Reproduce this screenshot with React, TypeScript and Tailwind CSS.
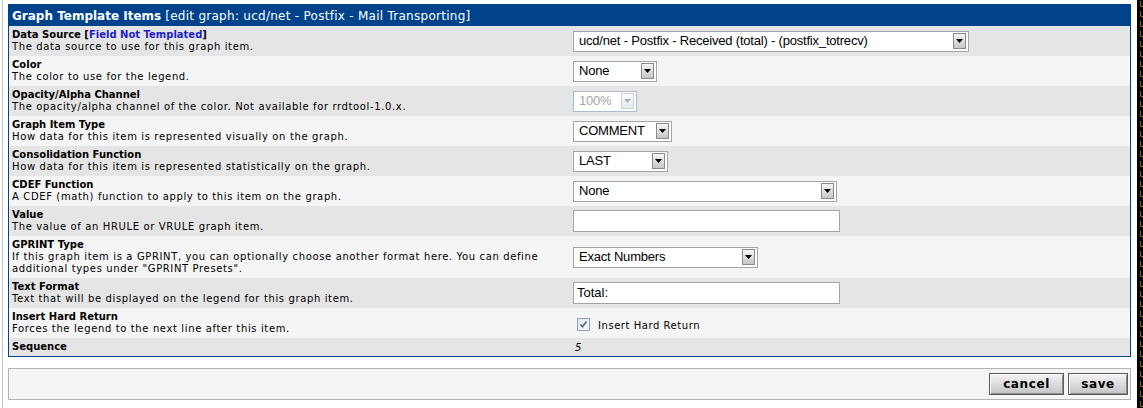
import React from 'react';

type Field = {
  title: React.ReactNode;
  desc?: React.ReactNode;
  control: React.ReactNode;
};

function Arrow({ disabled }: { disabled?: boolean }) {
  return (
    <span
      className={`ml-auto mr-[2px] flex h-[16px] w-[13px] shrink-0 items-center justify-center border ${
        disabled
          ? 'border-[#c9d3de] bg-gradient-to-b from-[#fafafa] to-[#e6e9ee]'
          : 'border-[#8a8a8a] bg-gradient-to-b from-[#f6f6f6] to-[#c6c6c6]'
      }`}
    >
      <svg width="7" height="4" viewBox="0 0 7 4">
        <path d="M0 0h7L3.5 4z" fill={disabled ? '#a8b0bb' : '#000'} />
      </svg>
    </span>
  );
}

function Select({ value, className, disabled }: { value: string; className: string; disabled?: boolean }) {
  return (
    <div
      className={`flex h-[21px] items-center bg-white pl-[5px] font-['Liberation_Sans',sans-serif] text-[13px] border ${
        disabled ? 'border-[#a9bcd2] text-[#a4a4a4]' : 'border-[#a5a5a5] text-black'
      } ${className}`}
    >
      <span className="whitespace-nowrap tracking-[-0.2px]">{value}</span>
      <Arrow disabled={disabled} />
    </div>
  );
}

function TextBox({ value, className }: { value?: string; className: string }) {
  return (
    <div
      className={`flex h-[22px] items-center border border-[#a5a5a5] bg-white pl-[3px] font-['Liberation_Sans',sans-serif] text-[13px] text-black ${className}`}
    >
      {value}
    </div>
  );
}

function CheckBox() {
  return (
    <span className="flex h-[13px] w-[13px] items-center justify-center border border-[#8ea3bb] bg-gradient-to-br from-[#e4e7ea] to-[#f8f8f8]">
      <svg width="9" height="9" viewBox="0 0 9 9">
        <path d="M1.5 4.5l2 2.2L7.5 1.5" fill="none" stroke="#5b6f8c" strokeWidth="1.8" />
      </svg>
    </span>
  );
}

const fields: Field[] = [
  {
    title: (
      <>
        Data Source [<span className="text-[#1d1dcc]">Field Not Templated</span>]
      </>
    ),
    desc: 'The data source to use for this graph item.',
    control: <Select value="ucd/net - Postfix - Received (total) - (postfix_totrecv)" className="w-[396px]" />,
  },
  {
    title: 'Color',
    desc: 'The color to use for the legend.',
    control: <Select value="None" className="w-[84px]" />,
  },
  {
    title: 'Opacity/Alpha Channel',
    desc: 'The opacity/alpha channel of the color. Not available for rrdtool-1.0.x.',
    control: <Select value="100%" className="w-[64px]" disabled />,
  },
  {
    title: 'Graph Item Type',
    desc: 'How data for this item is represented visually on the graph.',
    control: <Select value="COMMENT" className="w-[99px]" />,
  },
  {
    title: 'Consolidation Function',
    desc: 'How data for this item is represented statistically on the graph.',
    control: <Select value="LAST" className="w-[95px]" />,
  },
  {
    title: 'CDEF Function',
    desc: 'A CDEF (math) function to apply to this item on the graph.',
    control: <Select value="None" className="w-[264px]" />,
  },
  {
    title: 'Value',
    desc: 'The value of an HRULE or VRULE graph item.',
    control: <TextBox className="w-[267px]" />,
  },
  {
    title: 'GPRINT Type',
    desc: (
      <>
        If this graph item is a GPRINT, you can optionally choose another format here. You can define
        <br />
        additional types under "GPRINT Presets".
      </>
    ),
    control: <Select value="Exact Numbers" className="w-[185px]" />,
  },
  {
    title: 'Text Format',
    desc: 'Text that will be displayed on the legend for this graph item.',
    control: <TextBox value="Total:" className="w-[267px]" />,
  },
  {
    title: 'Insert Hard Return',
    desc: 'Forces the legend to the next line after this item.',
    control: (
      <div className="flex items-center pl-[4px] pt-[2px]">
        <CheckBox />
        <span className="ml-[8px] mt-[4px] tracking-[0.55px]">Insert Hard Return</span>
      </div>
    ),
  },
  {
    title: 'Sequence',
    control: <span className="pl-[2px] pt-[1px] italic">5</span>,
  },
];

export default function App() {
  return (
    <div className="flex h-[408px] w-[1143px] overflow-hidden bg-white font-['DejaVu_Sans',Verdana,sans-serif]">
      <div className="w-[2px] shrink-0" />
      <div className="flex-1 border-l border-[#c4c4c4] pl-[5px] pr-[6px] pt-[4px]">
        <div className="border border-[#00438a]">
          <div className="flex h-[21px] items-center bg-[#00438a] px-[3px] text-[12px] text-white">
            <span className="font-bold">Graph Template Items</span>
            <span className="ml-[4px] tracking-[0.27px]">[edit graph: ucd/net - Postfix - Mail Transporting]</span>
          </div>
          {fields.map((f, i) => (
            <div key={i} className={`flex items-center ${i % 2 === 0 ? 'bg-[#e5e5e5]' : 'bg-[#f5f5f5]'}`}>
              <div className="w-[561px] shrink-0 whitespace-nowrap px-[3px] py-[3px] text-[10px] leading-[12px] text-black">
                <div className="font-bold">{f.title}</div>
                {f.desc && <div className="tracking-[0.63px]">{f.desc}</div>}
              </div>
              <div className="flex flex-1 items-center px-[3px] text-[10px] leading-[12px] text-black">{f.control}</div>
            </div>
          ))}
        </div>
        <div className="mt-[11px] flex h-[32px] items-center justify-end border border-[#b4b4b4] bg-[#f5f5f5] pr-[2px]">
          <button className="flex h-[22px] w-[75px] items-center justify-center border border-[#5a5a5a] bg-gradient-to-b from-[#f4f4f4] to-[#c4c4c4] text-[12px] font-bold tracking-[0.6px] text-black shadow-[inset_1px_1px_0_#fff,inset_-1px_-1px_0_#8c8c8c]">
            cancel
          </button>
          <button className="ml-[4px] flex h-[22px] w-[60px] items-center justify-center border border-[#5a5a5a] bg-gradient-to-b from-[#f4f4f4] to-[#c4c4c4] text-[12px] font-bold tracking-[0.6px] text-black shadow-[inset_1px_1px_0_#fff,inset_-1px_-1px_0_#8c8c8c]">
            save
          </button>
        </div>
      </div>
      <div className="w-[6px] shrink-0 overflow-hidden bg-black pl-[2px] font-['Liberation_Mono',monospace] text-[10px] leading-[10px] text-[#b9742e]">
        {Array.from({ length: 41 }).map((_, i) => (
          <div key={i}>u</div>
        ))}
      </div>
    </div>
  );
}
